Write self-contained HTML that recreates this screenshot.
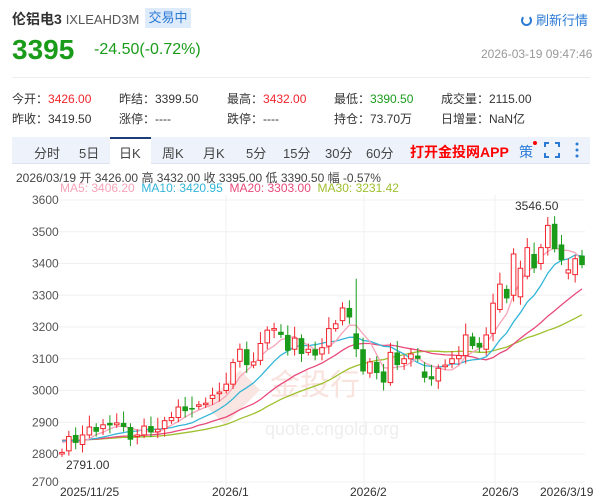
<!DOCTYPE html>
<html><head><meta charset="utf-8"><style>
*{margin:0;padding:0;box-sizing:border-box}
body{width:600px;height:500px;overflow:hidden;background:#fff;font-family:"Liberation Sans","Noto Sans CJK SC",sans-serif;color:#333;position:relative}
.a{position:absolute;white-space:nowrap}
.r{color:#f2242d}.g{color:#1a9b1a}
</style></head><body>
<div class="a" style="left:12px;top:9px;font-size:14px;font-weight:bold;color:#333">伦铝电3 <span style="font-weight:normal;font-size:13px;color:#555">IXLEAHD3M</span></div>
<div class="a" style="left:145px;top:8px;width:46px;height:20px;background:#deebfa;color:#2a7ad6;font-size:13px;line-height:20px;text-align:center">交易中</div>
<div class="a" style="left:521px;top:10px;font-size:13px;color:#2a7ad6"><span style="display:inline-block;width:11px;height:11px;border:2px solid #2a7ad6;border-radius:50%;border-top-color:transparent;margin-right:4px;vertical-align:-1px"></span>刷新行情</div>
<div class="a g" style="left:12px;top:34px;font-size:28px;font-weight:bold">3395</div>
<div class="a g" style="left:94px;top:41px;font-size:16px">-24.50(-0.72%)</div>
<div class="a" style="left:481px;top:47px;font-size:12px;color:#999">2026-03-19 09:47:46</div>
<div class="a" style="left:12px;top:77px;width:578px;height:1px;background:#eee"></div>
<div class="a" style="left:12px;top:89px;font-size:12px;line-height:20px">今开：<span class="r">3426.00</span><br>昨收：3419.50</div>
<div class="a" style="left:119px;top:89px;font-size:12px;line-height:20px">昨结：3399.50<br>涨停：----</div>
<div class="a" style="left:227px;top:89px;font-size:12px;line-height:20px">最高：<span class="r">3432.00</span><br>跌停：----</div>
<div class="a" style="left:334px;top:89px;font-size:12px;line-height:20px">最低：<span class="g">3390.50</span><br>持仓：73.70万</div>
<div class="a" style="left:441px;top:89px;font-size:12px;line-height:20px">成交量：2115.00<br>日增量：NaN亿</div>
<div class="a" style="left:12px;top:137px;width:578px;height:27px;background:#eef3fb;border-bottom:1px solid #dbe4f0"></div>
<div class="a" style="left:110px;top:137px;width:41px;height:27px;background:#fff;border-top:2px solid #1d3c7a"></div>
<div class="a" style="left:0;top:143px;font-size:13px;color:#444">
<span class="a" style="left:34px">分时</span><span class="a" style="left:79px">5日</span><span class="a" style="left:119px">日K</span><span class="a" style="left:162px">周K</span><span class="a" style="left:203px">月K</span><span class="a" style="left:246px">5分</span><span class="a" style="left:283px">15分</span><span class="a" style="left:325px">30分</span><span class="a" style="left:366px">60分</span>
<span class="a" style="left:410px;color:#f00;font-weight:bold;font-size:14px;top:-1px">打开金投网APP</span>
<span class="a" style="left:519px;color:#2a7ad6;font-size:14px;top:-1px">策</span>
</div>
<div class="a" style="left:533px;top:141px;width:4px;height:4px;border-radius:50%;background:#f00"></div>
<svg class="a" style="left:544px;top:142px" width="16" height="16" viewBox="0 0 16 16" fill="none" stroke="#2a7ad6" stroke-width="2"><path d="M1 5V1h4M11 1h4v4M15 11v4h-4M5 15H1v-4"/></svg>
<svg class="a" style="left:574px;top:142px" width="6" height="16"><circle cx="3" cy="2" r="1.5" fill="#2a7ad6"/><circle cx="3" cy="8" r="1.5" fill="#2a7ad6"/><circle cx="3" cy="14" r="1.5" fill="#2a7ad6"/></svg>
<div class="a" style="left:16px;top:169px;font-size:12px;color:#444">2026/03/19 开 3426.00 高 3432.00 收 3395.00 低 3390.50 幅 -0.57%</div>
<div class="a" style="left:60px;top:181px;font-size:12px"><span style="color:#f7a3b8">MA5: 3406.20</span>&nbsp; <span style="color:#33b5d8">MA10: 3420.95</span>&nbsp; <span style="color:#e84a7b">MA20: 3303.00</span>&nbsp; <span style="color:#9ec02e">MA30: 3231.42</span></div>
<svg id="c" class="a" style="left:0;top:190px" width="600" height="310"></svg>
<script>
var svg=document.getElementById('c');var s='';
function Y(p){return 200+(3600-p)*0.3175-190}
for(var p=2700;p<=3600;p+=100){var y=Y(p);if(p==2700)y=292;s+='<line x1="58" x2="585" y1="'+y+'" y2="'+y+'" stroke="#f0f0f0"/>';s+='<text x="32" y="'+(y+4)+'" font-size="12" fill="#555" font-family="Liberation Sans">'+p+'</text>';}
[226,364,495].forEach(function(x){s+='<line x1="'+x+'" x2="'+x+'" y1="5" y2="300" stroke="#f0f0f0"/>'});
s+='<text x="270" y="205" font-size="30" fill="#f8e3de" font-family="Noto Sans CJK SC">金投行</text>';
s+='<path d="M205 215 L240 180 L260 200 L225 235 Z" fill="#f9e6e2"/>';
s+='<text x="265" y="245" font-size="18" fill="#eee" font-family="Liberation Sans">quote.cngold.org</text>';
var C=[2805,2855,2835,2860,2885,2870,2892,2890,2898,2885,2845,2860,2888,2868,2878,2905,2915,2948,2935,2940,2955,2960,2985,2995,3020,3088,3130,3080,3090,3148,3190,3195,3175,3125,3165,3115,3130,3110,3135,3195,3210,3260,3230,3130,3060,3090,3055,3025,3120,3080,3100,3115,3100,3040,3035,3070,3080,3100,3110,3175,3140,3135,3175,3275,3335,3290,3430,3385,3450,3385,3450,3520,3445,3410,3380,3415,3395];
var O=[2800,2810,2860,2830,2860,2885,2880,2898,2892,2898,2885,2855,2860,2888,2870,2880,2905,2915,2950,2945,2950,2960,2975,2990,3000,3020,3092,3130,3080,3095,3150,3190,3185,3175,3130,3165,3120,3130,3115,3140,3195,3220,3260,3180,3130,3055,3090,3060,3025,3120,3085,3100,3110,3060,3045,3030,3075,3085,3100,3110,3170,3150,3130,3180,3255,3320,3300,3295,3360,3430,3400,3450,3525,3460,3370,3365,3425];
var n=C.length,x0=62,dx=(582-x0)/(n-1);
function ma(k){var d='';for(var i=0;i<n;i++){var a=0,m=0;for(var j=Math.max(0,i-k+1);j<=i;j++){a+=C[j];m++}a/=m;a=a*(m/k)+(m<k?2845*(1-m/k):0);d+=(i?'L':'M')+(x0+i*dx).toFixed(1)+' '+Y(a).toFixed(1)}return d}
[[30,'#9ec02e'],[20,'#e84a7b'],[10,'#33b5d8'],[5,'#f7a3b8']].forEach(function(m){s+='<path d="'+ma(m[0])+'" fill="none" stroke="'+m[1]+'" stroke-width="1.3"/>'});
for(var i=0;i<n;i++){var o=O[i],c=C[i],x=x0+i*dx,up=c>=o,col=up?'#f2242d':'#1a9b1a';var h=Math.max(o,c)+12+(i%5)*6,l=Math.min(o,c)-10-(i%4)*5;if(i==71)h=3546.5;if(i==0)l=2791;if(i==43)h=3352;
s+='<line x1="'+x+'" x2="'+x+'" y1="'+Y(h)+'" y2="'+Y(l)+'" stroke="'+col+'"/>';var t=Y(Math.max(o,c)),hh=Math.max(1.5,Math.abs(Y(o)-Y(c)));
s+=up?'<rect x="'+(x-2.3)+'" y="'+t+'" width="4.6" height="'+hh+'" fill="#fff" stroke="'+col+'"/>':'<rect x="'+(x-2.8)+'" y="'+t+'" width="5.6" height="'+hh+'" fill="'+col+'"/>';}
s+='<text x="66" y="279" font-size="12" fill="#333" font-family="Liberation Sans">2791.00</text>';
s+='<text x="515" y="20" font-size="12" fill="#333" font-family="Liberation Sans">3546.50</text>';
var L=[[60,'2025/11/25'],[212,'2026/1'],[350,'2026/2'],[482,'2026/3'],[540,'2026/3/19']];
L.forEach(function(a){s+='<text x="'+a[0]+'" y="306" font-size="12" fill="#333" font-family="Liberation Sans">'+a[1]+'</text>'});
svg.innerHTML=s;
</script>
</body></html>
